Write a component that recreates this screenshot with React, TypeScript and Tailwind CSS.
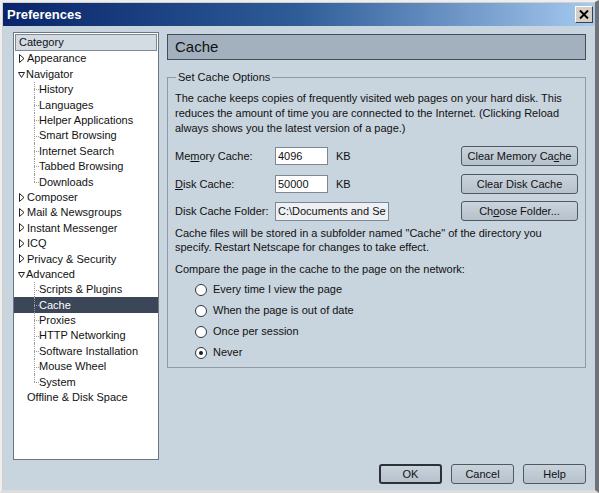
import React from 'react';

type Node = {
  label: string;
  kind: 'closed' | 'open' | 'leaf' | 'child';
  last?: boolean;
  selected?: boolean;
};

const tree: Node[] = [
  { label: 'Appearance', kind: 'closed' },
  { label: 'Navigator', kind: 'open' },
  { label: 'History', kind: 'child' },
  { label: 'Languages', kind: 'child' },
  { label: 'Helper Applications', kind: 'child' },
  { label: 'Smart Browsing', kind: 'child' },
  { label: 'Internet Search', kind: 'child' },
  { label: 'Tabbed Browsing', kind: 'child' },
  { label: 'Downloads', kind: 'child', last: true },
  { label: 'Composer', kind: 'closed' },
  { label: 'Mail & Newsgroups', kind: 'closed' },
  { label: 'Instant Messenger', kind: 'closed' },
  { label: 'ICQ', kind: 'closed' },
  { label: 'Privacy & Security', kind: 'closed' },
  { label: 'Advanced', kind: 'open' },
  { label: 'Scripts & Plugins', kind: 'child' },
  { label: 'Cache', kind: 'child', selected: true },
  { label: 'Proxies', kind: 'child' },
  { label: 'HTTP Networking', kind: 'child' },
  { label: 'Software Installation', kind: 'child' },
  { label: 'Mouse Wheel', kind: 'child' },
  { label: 'System', kind: 'child', last: true },
  { label: 'Offline & Disk Space', kind: 'leaf' },
];

const Twisty = ({ open }: { open: boolean }) => (
  <svg width="7" height="9" viewBox="0 0 7 9" className="shrink-0">
    {open ? (
      <path d="M0.5 2.5 L6.5 2.5 L3.5 7.5 Z" fill="none" stroke="#222" strokeWidth="1" />
    ) : (
      <path d="M1.5 0.5 L6 4.5 L1.5 8.5 Z" fill="none" stroke="#222" strokeWidth="1" />
    )}
  </svg>
);

const TreeRow = ({ node }: { node: Node }) => {
  const base = `flex items-center h-[15.4px] whitespace-nowrap ${node.selected ? 'bg-[#3b4659] text-white' : 'text-[#111]'}`;
  if (node.kind === 'child') {
    return (
      <div className={base}>
        <div className="w-[20px] shrink-0" />
        <div className="relative w-[5px] h-full shrink-0">
          <div className={`absolute left-0 top-0 border-l border-dotted border-[#9a9a9a] ${node.last ? 'h-1/2' : 'h-full'}`} />
          <div className="absolute left-0 top-1/2 w-[5px] border-t border-dotted border-[#9a9a9a]" />
        </div>
        <span>{node.label}</span>
      </div>
    );
  }
  return (
    <div className={base}>
      <div className="w-[4px] shrink-0" />
      {node.kind === 'leaf' ? <div className="w-[7px] shrink-0" /> : <Twisty open={node.kind === 'open'} />}
      <span className={node.kind === 'open' ? 'ml-[1px]' : 'ml-[2px]'}>{node.label}</span>
    </div>
  );
};

const Btn = ({ children, w, def }: { children: React.ReactNode; w: string; def?: boolean }) => (
  <button
    className={`${w} h-[20px] rounded-[3px] bg-gradient-to-b from-[#c9d3dc] to-[#b6c1cc] text-[11px] text-[#111] ${def ? 'border-2 border-[#2c323a]' : 'border border-[#4f5964]'}`}
  >
    {children}
  </button>
);

const Radio = ({ label, checked }: { label: string; checked?: boolean }) => (
  <div className="flex items-center h-[21px]">
    <span className="w-[12px] h-[12px] rounded-full border border-[#2e3640] bg-white flex items-center justify-center">
      {checked && <span className="w-[4px] h-[4px] rounded-full bg-[#1a1f26]" />}
    </span>
    <span className="ml-[6px]">{label}</span>
  </div>
);

export default function App() {
  return (
    <div
      className="w-[599px] h-[493px] bg-[#d4d0c8] border-t-2 border-l-2 border-[#eeeeee] border-r-[4px] border-r-[#6f7378] border-b-[3px] border-b-[#dcdcdc] overflow-hidden text-[11px] text-[#111]"
      style={{ fontFamily: '"Liberation Sans", Arial, sans-serif' }}
    >
      <div className="ml-[1px] mt-[1px] h-[23px] bg-gradient-to-r from-[#0a246a] via-[#2f5d98] to-[#a6caf0] flex items-center justify-between pl-[4px] pr-[2px]">
        <span className="text-white font-bold text-[13px]">Preferences</span>
        <div className="w-[18px] h-[17px] bg-[#d4d0c8] border border-t-white border-l-white border-r-[#404040] border-b-[#404040] flex items-center justify-center">
          <svg width="10" height="9" viewBox="0 0 10 9">
            <path d="M1 0.5 L9 8.5 M9 0.5 L1 8.5" stroke="#000" strokeWidth="2" />
          </svg>
        </div>
      </div>

      <div className="ml-[1px] h-[464px] bg-[#c8d4de] flex flex-col pl-[10px] pr-[8px] pt-[6px]">
        <div className="flex gap-[8px]">
          <div className="w-[146px] h-[428px] bg-white border border-[#6b7682] flex flex-col">
            <div className="h-[17px] mx-[1px] mt-[1px] mb-[0px] bg-[#d3dbe3] border border-[#7d8894] flex items-center pl-[3px] text-[#111]">
              Category
            </div>
            <div>
              {tree.map((n) => (
                <TreeRow key={n.label} node={n} />
              ))}
            </div>
          </div>

          <div className="w-[419px] flex flex-col">
            <div className="mt-[2px] h-[26px] bg-[#a3b1bf] border border-[#434d59] flex items-center pl-[7px] text-[15px] text-[#111]">
              Cache
            </div>
            <fieldset className="mt-[10px] h-[298px] border border-[#8e9aa6] px-[7px]">
              <legend className="ml-[1px] px-[2px] leading-[15px]">Set Cache Options</legend>
              <div className="mt-[6px] leading-[15px]">
                The cache keeps copies of frequently visited web pages on your hard disk. This reduces the amount of time you are connected to the Internet. (Clicking Reload always shows you the latest version of a page.)
              </div>

              <div className="mt-[10px] flex items-center h-[20px]">
                <span className="w-[100px]">
                  Me<span className="underline">m</span>ory Cache:
                </span>
                <input
                  readOnly
                  value="4096"
                  className="w-[53px] h-[18px] bg-white border border-[#7d8894] px-[2px] text-[11px] outline-none"
                />
                <span className="ml-[8px]">KB</span>
                <div className="flex-1" />
                <Btn w="w-[117px]">
                  Clear Memory Ca<span className="underline">c</span>he
                </Btn>
              </div>

              <div className="mt-[8px] flex items-center h-[20px]">
                <span className="w-[100px]">
                  <span className="underline">D</span>isk Cache:
                </span>
                <input
                  readOnly
                  value="50000"
                  className="w-[53px] h-[18px] bg-white border border-[#7d8894] px-[2px] text-[11px] outline-none"
                />
                <span className="ml-[8px]">KB</span>
                <div className="flex-1" />
                <Btn w="w-[117px]">Clear Disk Cache</Btn>
              </div>

              <div className="mt-[7px] flex items-center h-[20px]">
                <span className="w-[100px]">Disk Cache Folder:</span>
                <input
                  readOnly
                  value="C:\Documents and Settings"
                  className="w-[114px] h-[19px] bg-[#eef1f4] border border-[#7d8894] px-[2px] text-[11px] outline-none"
                />
                <div className="flex-1" />
                <Btn w="w-[117px]">
                  Ch<span className="underline">o</span>ose Folder...
                </Btn>
              </div>

              <div className="mt-[5px] leading-[14px]">
                Cache files will be stored in a subfolder named "Cache" of the directory you specify. Restart Netscape for changes to take effect.
              </div>

              <div className="mt-[8px] leading-[15px]">Compare the page in the cache to the page on the network:</div>

              <div className="mt-[2px] pl-[20px]">
                <Radio label="Every time I view the page" />
                <Radio label="When the page is out of date" />
                <Radio label="Once per session" />
                <Radio label="Never" checked />
              </div>
            </fieldset>
          </div>
        </div>

        <div className="mt-[4px] flex justify-end gap-[9px] pr-[1px]">
          <Btn w="w-[63px]" def>
            OK
          </Btn>
          <Btn w="w-[63px]">Cancel</Btn>
          <Btn w="w-[63px]">Help</Btn>
        </div>
      </div>
    </div>
  );
}
